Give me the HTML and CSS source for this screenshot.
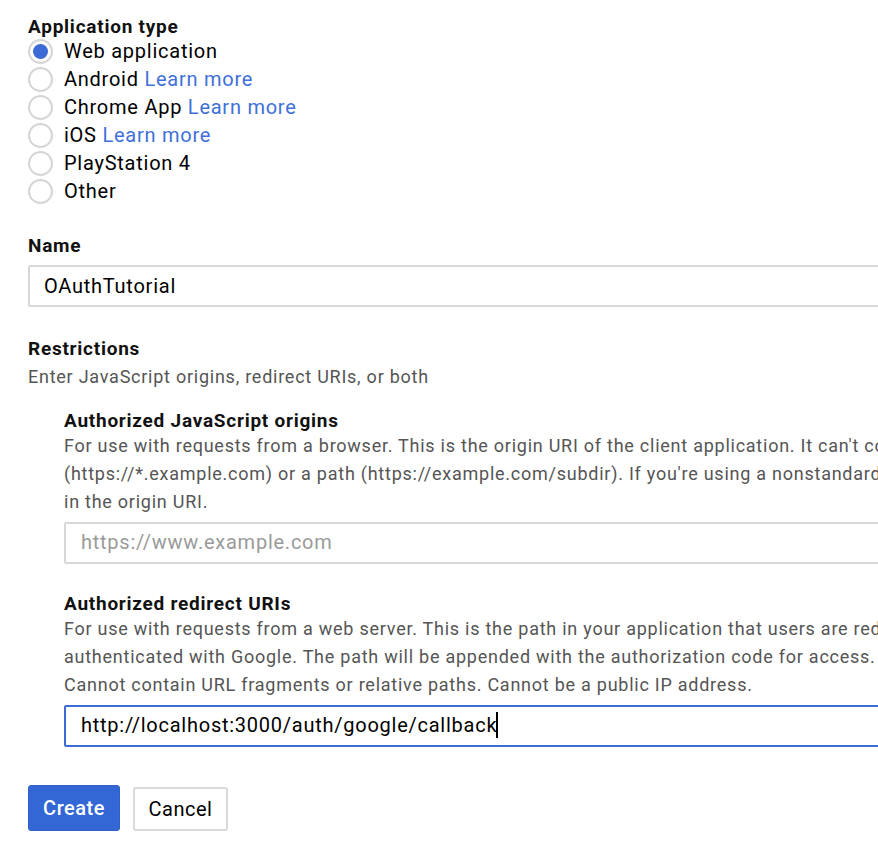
FILE: index.html
```html
<!DOCTYPE html>
<html lang="en">
<head>
<meta charset="utf-8">
<title>Create OAuth client ID</title>
<link rel="stylesheet" href="styles.css">
</head>
<body>
<form class="form">
  <div class="heading">Application type</div>
  <div class="radios">
    <label class="radio-row"><span class="radio checked"></span><span class="radio-label">Web application</span></label>
    <label class="radio-row"><span class="radio"></span><span class="radio-label">Android <a class="link">Learn more</a></span></label>
    <label class="radio-row"><span class="radio"></span><span class="radio-label">Chrome App <a class="link">Learn more</a></span></label>
    <label class="radio-row"><span class="radio"></span><span class="radio-label">iOS <a class="link">Learn more</a></span></label>
    <label class="radio-row"><span class="radio"></span><span class="radio-label">PlayStation 4</span></label>
    <label class="radio-row"><span class="radio"></span><span class="radio-label">Other</span></label>
  </div>

  <div class="heading name-heading">Name</div>
  <div class="field name-field">OAuthTutorial</div>

  <div class="heading restrictions-heading">Restrictions</div>
  <div class="desc restrictions-desc">Enter JavaScript origins, redirect URIs, or both</div>

  <div class="sub">
    <div class="heading sub-heading">Authorized JavaScript origins</div>
    <div class="desc sub-desc">For use with requests from a browser. This is the origin URI of the client application. It can't contain a wildcard<br>(https://*.example.com) or a path (https://example.com/subdir). If you're using a nonstandard port, you must include it<br>in the origin URI.</div>
    <div class="field sub-field placeholder">https://www.example.com</div>

    <div class="heading sub-heading second">Authorized redirect URIs</div>
    <div class="desc sub-desc">For use with requests from a web server. This is the path in your application that users are redirected to after they have<br>authenticated with Google. The path will be appended with the authorization code for access. Must have a protocol.<br>Cannot contain URL fragments or relative paths. Cannot be a public IP address.</div>
    <div class="field sub-field focused">http://localhost:3000/auth/google/callback<span class="caret"></span></div>
  </div>

  <div class="actions">
    <button type="button" class="btn btn-primary">Create</button>
    <button type="button" class="btn btn-secondary">Cancel</button>
  </div>
</form>
</body>
</html>
```

FILE: styles.css
```css
html, body {
  margin: 0;
  padding: 0;
  overflow: hidden;
  background: #ffffff;
}

body {
  font-family: Roboto, "Liberation Sans", Arial, sans-serif;
  color: #000000;
  width: 878px;
  height: 868px;
  letter-spacing: 0.75px;
}

.form {
  padding: 17px 0 0 28px;
  display: flex;
  flex-direction: column;
  align-items: flex-start;
}

.heading {
  font-size: 19px;
  font-weight: 700;
  line-height: 20px;
  color: #111111;
  white-space: nowrap;
}

.radios {
  display: flex;
  flex-direction: column;
}

.radio-row {
  display: flex;
  align-items: center;
  height: 28px;
}

.radio {
  box-sizing: border-box;
  width: 25px;
  height: 25px;
  border: 2px solid #d5d5d5;
  border-radius: 50%;
  background: #ffffff;
  display: flex;
  align-items: center;
  justify-content: center;
  flex-shrink: 0;
}

.radio.checked::after {
  content: "";
  width: 15px;
  height: 15px;
  border-radius: 50%;
  background: #3d6bd6;
}

.radio-label {
  margin-left: 11px;
  font-size: 20px;
  line-height: 28px;
  color: #000000;
  white-space: nowrap;
}

.link {
  color: #4070d9;
  text-decoration: none;
}

.name-heading {
  margin-top: 31px;
}

.field {
  box-sizing: border-box;
  height: 42px;
  width: 1000px;
  border: 2px solid #d7d7d7;
  border-radius: 2px;
  padding: 0 0 0 14px;
  font-size: 20px;
  line-height: 38px;
  color: #000000;
  white-space: nowrap;
  display: flex;
  align-items: center;
}

.name-field {
  margin-top: 9px;
}

.restrictions-heading {
  margin-top: 32px;
}

.desc {
  font-size: 18px;
  line-height: 28px;
  color: #555555;
  white-space: nowrap;
}

.restrictions-desc {
  margin-top: 4px;
}

.sub {
  margin-left: 36px;
  display: flex;
  flex-direction: column;
  align-items: flex-start;
}

.sub-heading {
  margin-top: 20px;
}

.sub-heading.second {
  margin-top: 30px;
}

.sub-desc {
  margin-top: 1px;
}

.sub-field {
  margin-top: 6px;
  padding-left: 15px;
  padding-bottom: 2px;
}

.placeholder {
  color: #9a9a9a;
}

.focused {
  border-color: #3b6bd6;
}

.caret {
  display: inline-block;
  width: 2px;
  height: 26px;
  background: #000000;
  margin-left: -1px;
}

.actions {
  margin-top: 38px;
  display: flex;
  align-items: flex-end;
  gap: 13px;
}

.btn {
  box-sizing: border-box;
  font-family: Roboto, "Liberation Sans", Arial, sans-serif;
  font-size: 20px;
  letter-spacing: 0.5px;
  border-radius: 3px;
  cursor: pointer;
  padding: 0;
}

.btn-primary {
  width: 92px;
  height: 46px;
  background: #3367d6;
  color: #ffffff;
  border: 1px solid #2f5fc7;
  font-weight: 500;
}

.btn-secondary {
  width: 95px;
  height: 44px;
  background: #ffffff;
  color: #000000;
  border: 2px solid #dadada;
  font-weight: 400;
}
```
